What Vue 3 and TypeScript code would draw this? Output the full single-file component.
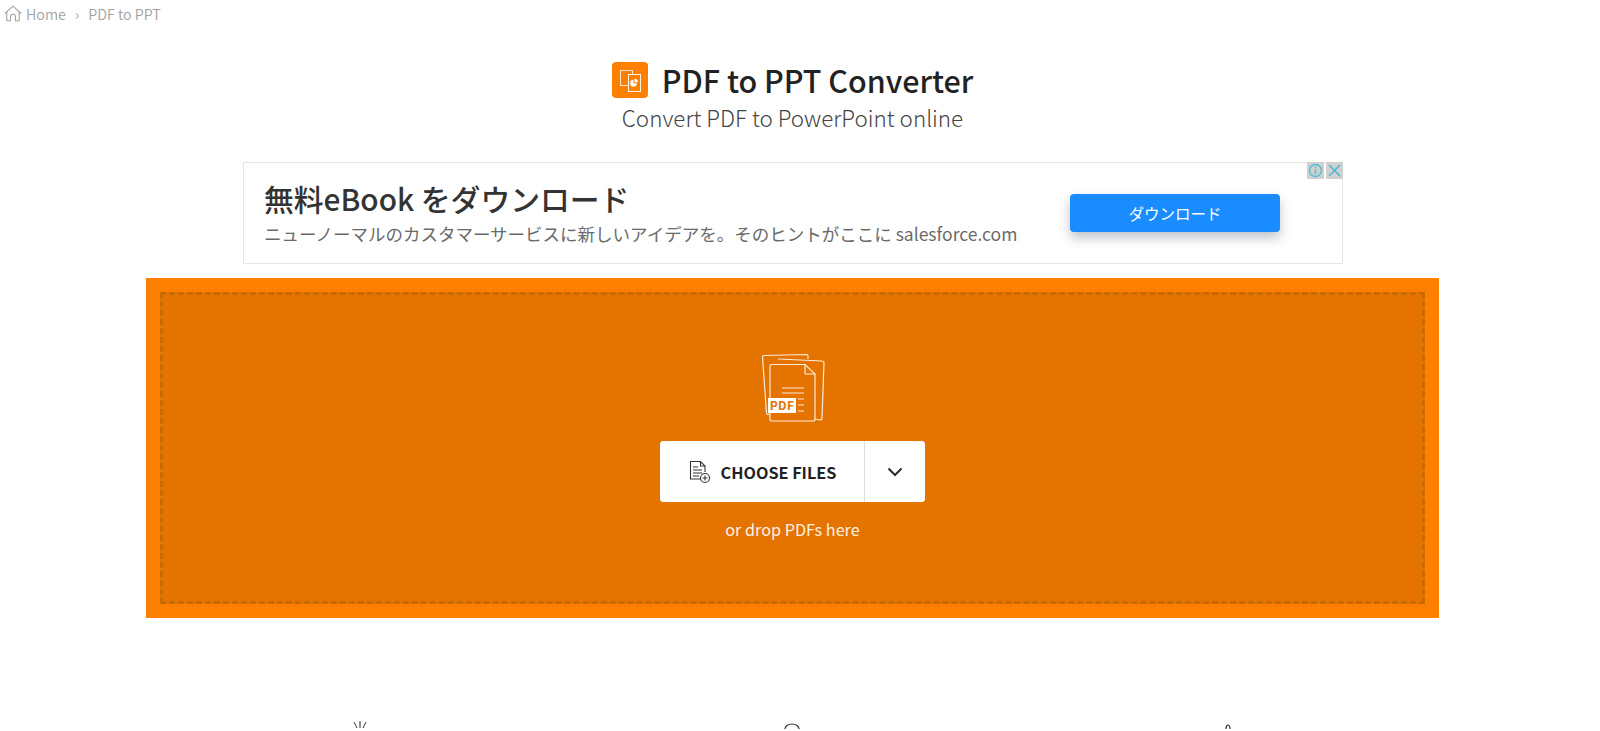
<script setup lang="ts">
const adTitle: string = '無料eBook をダウンロード'
const adText: string = 'ニューノーマルのカスタマーサービスに新しいアイデアを。そのヒントがここに salesforce.com'
</script>

<template>
  <div class="page">
    <nav class="crumbs">
      <svg class="home" width="18" height="17" viewBox="0 0 18 17" fill="none" stroke="#a3a3a3" stroke-width="1.100">
        <path d="M.8 8.500 9 1.200l8.200 7.300" />
        <path d="M2.800 7v8.800h3.700v-4a2.500 2.500 0 0 1 5 0v4h3.700V7" />
      </svg>
      <span>Home</span>
      <span class="sep">›</span>
      <span>PDF to PPT</span>
    </nav>

    <header class="head">
      <div class="title-row">
        <span class="logo">
          <svg width="36" height="36" viewBox="0 0 36 36" fill="none">
            <rect x="8.500" y="8.500" width="12" height="15" stroke="#fff" stroke-opacity=".8" />
            <rect x="16.500" y="12.500" width="12" height="17" fill="#ff8000" stroke="#fff" stroke-opacity=".9" />
            <path d="M21.500 17.800a3.400 3.400 0 1 0 3.400 3.400h-3.400Z" fill="#fff" />
            <path d="M22.500 16.800v3.400h3.400a3.400 3.400 0 0 0-3.400-3.400Z" fill="#fff" />
          </svg>
        </span>
        <h1>PDF to PPT Converter</h1>
      </div>
      <p class="sub">Convert PDF to PowerPoint online</p>
    </header>

    <aside class="ad">
      <div class="ad-copy">
        <div class="ad-title">{{ adTitle }}</div>
        <div class="ad-text">{{ adText }}</div>
      </div>
      <div class="ad-btn">ダウンロード</div>
      <div class="ad-flags">
        <span class="flag">
          <svg width="17" height="17" viewBox="0 0 17 17" fill="none" stroke="#4fc0d8" stroke-width="1.500">
            <circle cx="8.500" cy="8.500" r="6" />
            <path d="M8.500 7.500v4.500M8.500 4.700v1.500" />
          </svg>
        </span>
        <span class="flag">
          <svg width="17" height="17" viewBox="0 0 17 17" fill="none" stroke="#3fb8d2" stroke-width="1.400">
            <path d="M3 3l11 11M14 3 3 14" />
          </svg>
        </span>
      </div>
    </aside>

    <section class="drop">
      <div class="dash">
        <svg class="docs" width="64" height="70" viewBox="0 0 64 70" fill="none" stroke="#fff" stroke-opacity=".85" stroke-width="1.200">
          <path d="M9 61.500H6.500Q5.500 61.500 5.500 60L1.500 4Q1.500 2.500 3 2.500L46 1.500Q47 1.500 47 3V6" />
          <path d="M17 6 61 8Q63 8 63 10L61 65Q61 67 59 67L54 66" />
          <path d="M9 45V13Q9 11.500 10.500 11.500H44L54 21V66Q54 68 52 68H10.500Q9 68 9 66.500V60" />
          <path d="M44 11.500V20Q44 21 45 21H54" />
          <path d="M21 35h22M21 40h22M37 46h6M37 52h6M37 58h6" />
          <rect x="7" y="45" width="28" height="15" fill="#fff" fill-opacity="1" stroke="none" />
          <text x="21" y="57" class="pdf-label">PDF</text>
        </svg>
        <div class="choose">
          <button class="choose-main" type="button">
            <svg width="24" height="24" viewBox="0 0 24 24" fill="none" stroke="#333" stroke-width="1.100">
              <path d="M13 19H2.500V1.500h10L17 6v6" />
              <path d="M12.500 1.500V6H17" />
              <path d="M5 7h5M5 10h9M5 13h9M5 16h6" />
              <circle cx="17" cy="18" r="4.500" fill="#fff" />
              <path d="M17 15.500v5M14.500 18h5" />
            </svg>
            <span>CHOOSE FILES</span>
          </button>
          <button class="choose-more" type="button">
            <svg width="16" height="10" viewBox="0 0 16 10" fill="none" stroke="#2b2b2b" stroke-width="2">
              <path d="m1.500 1.500 6.500 6.500 6.500-6.500" />
            </svg>
          </button>
        </div>
        <p class="hint">or drop PDFs here</p>
      </div>
    </section>

    <div class="features">
      <svg width="24" height="8" viewBox="0 0 24 8" fill="none" stroke="#333" stroke-width="1"><path d="M12 0v7M6 1l3 6M18 1l-3 6" /></svg>
      <svg width="24" height="8" viewBox="0 0 24 8" fill="none" stroke="#333" stroke-width="1.200"><path d="M5 8a7 5 0 0 1 14 0" /></svg>
      <svg class="last" width="24" height="8" viewBox="0 0 24 8" fill="none" stroke="#333" stroke-width="1.200"><path d="M10 8a2 4 0 0 1 4 0" /></svg>
    </div>
  </div>
</template>

<style>
html, body { margin: 0; background: #fff; overflow: hidden; }
</style>

<style scoped>
.page {
  width: 1600px;
  height: 731px;
  overflow: hidden;
  font-family: "Noto Sans CJK JP", "Noto Sans", sans-serif;
  color: #222;
}
.crumbs {
  display: flex;
  align-items: center;
  gap: 4px;
  height: 26px;
  padding-left: 4px;
  font-size: 14.300px;
  font-weight: 350;
  color: #a3a3a3;
}
.sep { margin: 0 5px; }
.head { width: 1585px; margin-top: 36px; text-align: center; }
.title-row { display: flex; justify-content: center; align-items: center; gap: 14px; height: 36px; }
.logo { width: 36px; height: 36px; border-radius: 4px; background: #ff8000; display: block; }
.logo svg { display: block; }
h1 { margin: 0; font-size: 30.500px; font-weight: 500; line-height: 36px; color: #222; }
.sub { margin: 4px 0 0; font-size: 22.400px; font-weight: 300; line-height: 30px; color: #444; }
.ad {
  position: relative;
  box-sizing: border-box;
  width: 1100px;
  height: 102px;
  margin: 30px 0 0 243px;
  border: 1px solid #e6e6e6;
  display: flex;
  align-items: center;
  justify-content: space-between;
  padding: 0 62px 0 20px;
}
.ad-copy { padding-bottom: 2px; }
.ad-title { font-size: 29.800px; font-weight: 500; line-height: 40px; color: #333; }
.ad-text { font-size: 17.500px; line-height: 26px; color: #6a6a6a; margin-top: 3px; }
.ad-btn {
  width: 210px;
  height: 38px;
  line-height: 38px;
  border-radius: 4px;
  background: #1a8cff;
  color: #fff;
  text-align: center;
  font-size: 15.500px;
  box-shadow: 0 6px 12px rgba(50, 60, 90, .3);
}
.ad-flags { position: absolute; top: -1px; right: -1px; display: flex; gap: 2px; }
.flag { width: 17px; height: 17px; background: #d0d0d0; display: block; }
.flag svg { display: block; }
.drop {
  box-sizing: border-box;
  width: 1293px;
  height: 340px;
  margin: 14px 0 0 146px;
  padding: 14px;
  background: #ff8000;
}
.dash {
  box-sizing: border-box;
  height: 312px;
  border: 3px dashed #c96a00;
  background: #e57300;
  background-clip: border-box;
  display: flex;
  flex-direction: column;
  align-items: center;
  padding-top: 58px;
}
.docs { display: block; }
.pdf-label {
  font-family: "Noto Sans CJK JP", sans-serif;
  font-size: 12px;
  font-weight: 700;
  letter-spacing: .3px;
  text-anchor: middle;
  fill: #e57300;
  stroke: none;
}
.choose { display: flex; margin-top: 18px; height: 61px; border-radius: 4px; background: #fff; overflow: hidden; }
.choose button { border: 0; background: #fff; padding: 0; font: inherit; display: flex; align-items: center; justify-content: center; }
.choose-main { width: 205px; gap: 9px; border-right: 1px solid #ddd !important; font-size: 16.200px !important; font-weight: 700 !important; color: #222; }
.choose-more { width: 60px; }
.hint { margin: 15px 0 0; font-size: 16.200px; line-height: 24px; color: #fff; opacity: .9; }
.features { display: flex; margin: 103px 0 0 0; padding-left: 348px; gap: 408px; }
.features svg { display: block; }
.features .last { margin-left: 4px; }
</style>
